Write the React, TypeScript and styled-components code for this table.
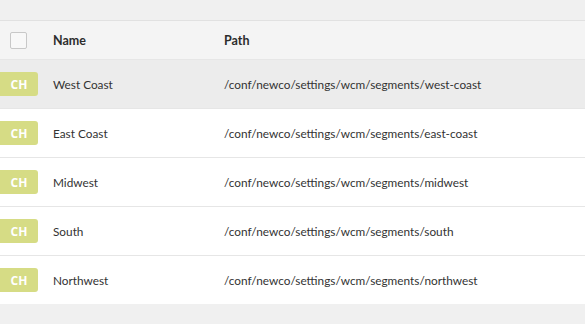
import React from "react";
import styled, { createGlobalStyle } from "styled-components";

const Global = createGlobalStyle`
  html, body { margin: 0; padding: 0; background: #f0f0f0; }
  body { font-family: Lato, "Open Sans", "Liberation Sans", sans-serif; color: #323232; }
`;

const Page = styled.div`
  padding-top: 20px;
  width: 585px;
  height: 324px;
  box-sizing: border-box;
  background: #f0f0f0;
`;

const Table = styled.div`
  border-top: 1px solid #e1e1e1;
  display: flex;
  flex-direction: column;
`;

const Grid = styled.div<{ $bg: string; $h: number; $border?: boolean }>`
  display: grid;
  grid-template-columns: 53px 171px 1fr;
  align-items: center;
  height: ${(p) => p.$h}px;
  background: ${(p) => p.$bg};
  border-bottom: ${(p) => (p.$border ? "1px solid #e6e6e6" : "none")};
`;

const HeadCell = styled.div`
  font-size: 12.5px;
  font-weight: 700;
  color: #2c2c2c;
`;

const Cell = styled.div`
  font-size: 11.8px;
  color: #333;
  white-space: nowrap;
`;

const Checkbox = styled.div`
  margin-left: 10px;
  width: 15px;
  height: 15px;
  border: 1px solid #c8c8c8;
  border-radius: 2px;
  background: #f8f8f8;
`;

const Badge = styled.div`
  width: 38px;
  height: 24px;
  border-radius: 0 3px 3px 0;
  background: #d6dc85;
  color: #fff;
  font-family: "Open Sans", sans-serif;
  font-weight: 700;
  font-size: 12px;
  display: flex;
  align-items: center;
  justify-content: center;
`;

const rows = [
  ["West Coast", "west-coast"],
  ["East Coast", "east-coast"],
  ["Midwest", "midwest"],
  ["South", "south"],
  ["Northwest", "northwest"],
];

export default function App() {
  return (
    <>
      <Global />
      <Page>
        <Table>
          <Grid $bg="#f4f4f4" $h={38} $border>
            <Checkbox />
            <HeadCell>Name</HeadCell>
            <HeadCell>Path</HeadCell>
          </Grid>
          {rows.map(([name, slug], i) => (
            <Grid
              key={slug}
              $bg={i === 0 ? "#ececec" : "#ffffff"}
              $h={48}
              $border={i < rows.length - 1}
            >
              <Badge>CH</Badge>
              <Cell>{name}</Cell>
              <Cell>/conf/newco/settings/wcm/segments/{slug}</Cell>
            </Grid>
          ))}
        </Table>
      </Page>
    </>
  );
}
